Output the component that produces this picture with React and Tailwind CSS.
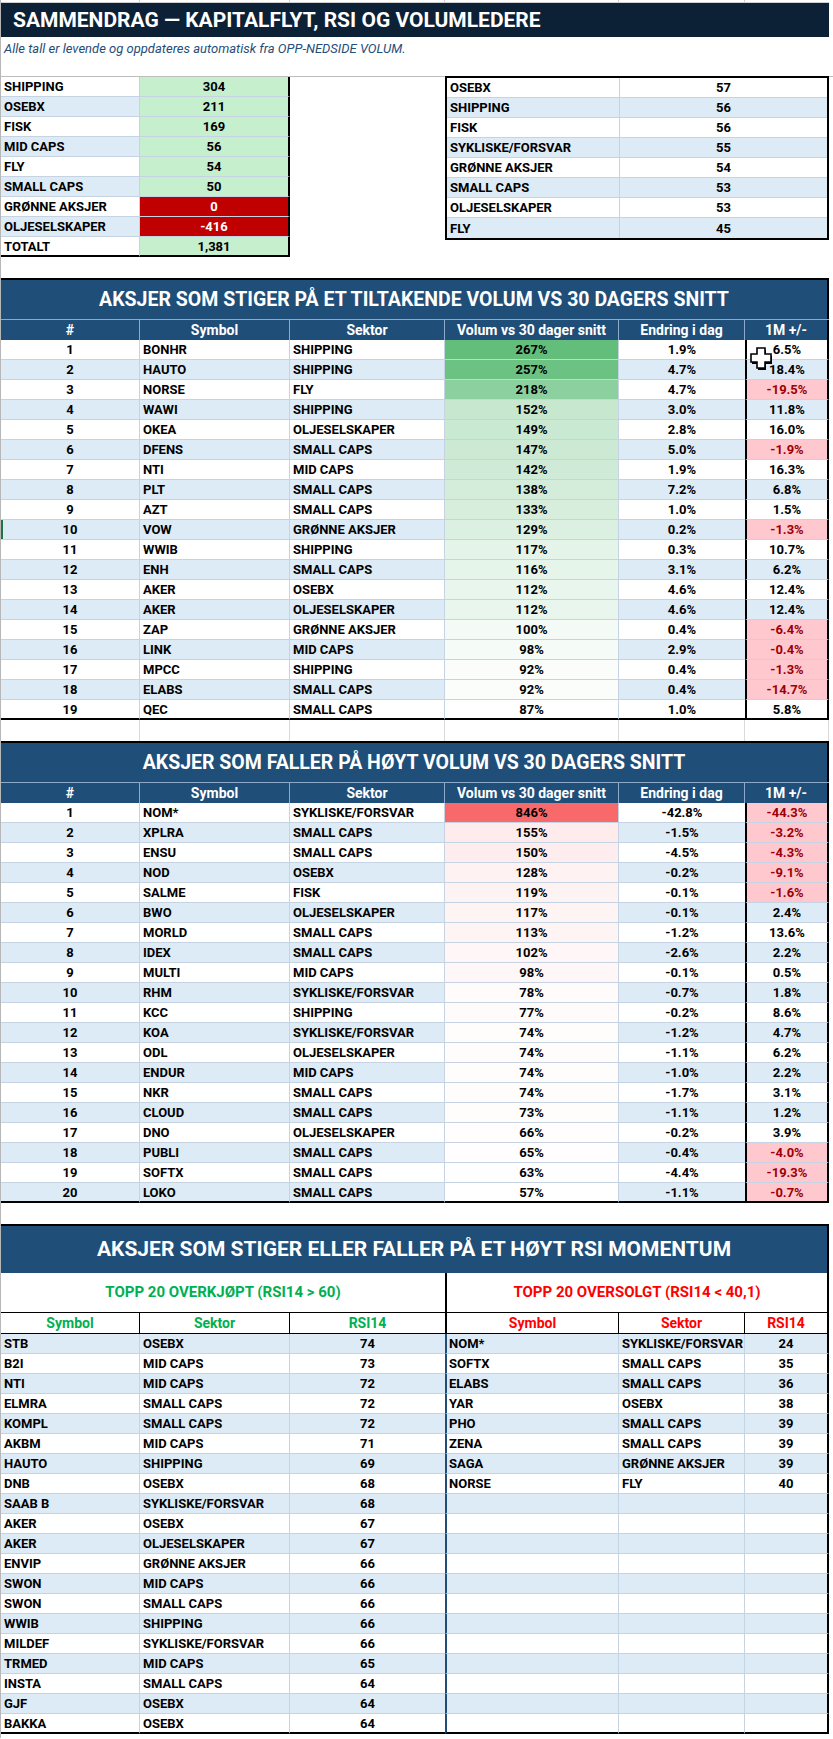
import React from "react";

const W = { a: "w-[139px]", b: "w-[150px]", c: "w-[155px]", d: "w-[174px]", e: "w-[126px]", f: "w-[84px]" };
const BLUE = "bg-[#ddebf7]";
const LR = "border-r border-r-[#c5d3e3]";
const LB = "border-b border-b-[#c5d3e3]";
const LASTB = "border-b-2 border-b-black";

const mix = (v, min, max, rgb) => {
  const t = Math.max(0, Math.min(1, (v - min) / (max - min)));
  const c = rgb.map((x) => Math.round(255 + (x - 255) * t));
  return `rgb(${c[0]},${c[1]},${c[2]})`;
};

const summaryLeft = [
  ["SHIPPING", "304", "g"],
  ["OSEBX", "211", "g"],
  ["FISK", "169", "g"],
  ["MID CAPS", "56", "g"],
  ["FLY", "54", "g"],
  ["SMALL CAPS", "50", "g"],
  ["GRØNNE AKSJER", "0", "r"],
  ["OLJESELSKAPER", "-416", "r"],
  ["TOTALT", "1,381", "g"],
];
const summaryRight = [
  ["OSEBX", "57"],
  ["SHIPPING", "56"],
  ["FISK", "56"],
  ["SYKLISKE/FORSVAR", "55"],
  ["GRØNNE AKSJER", "54"],
  ["SMALL CAPS", "53"],
  ["OLJESELSKAPER", "53"],
  ["FLY", "45"],
];

const up = [
  ["BONHR", "SHIPPING", 267, "1.9%", "6.5%"],
  ["HAUTO", "SHIPPING", 257, "4.7%", "18.4%"],
  ["NORSE", "FLY", 218, "4.7%", "-19.5%"],
  ["WAWI", "SHIPPING", 152, "3.0%", "11.8%"],
  ["OKEA", "OLJESELSKAPER", 149, "2.8%", "16.0%"],
  ["DFENS", "SMALL CAPS", 147, "5.0%", "-1.9%"],
  ["NTI", "MID CAPS", 142, "1.9%", "16.3%"],
  ["PLT", "SMALL CAPS", 138, "7.2%", "6.8%"],
  ["AZT", "SMALL CAPS", 133, "1.0%", "1.5%"],
  ["VOW", "GRØNNE AKSJER", 129, "0.2%", "-1.3%"],
  ["WWIB", "SHIPPING", 117, "0.3%", "10.7%"],
  ["ENH", "SMALL CAPS", 116, "3.1%", "6.2%"],
  ["AKER", "OSEBX", 112, "4.6%", "12.4%"],
  ["AKER", "OLJESELSKAPER", 112, "4.6%", "12.4%"],
  ["ZAP", "GRØNNE AKSJER", 100, "0.4%", "-6.4%"],
  ["LINK", "MID CAPS", 98, "2.9%", "-0.4%"],
  ["MPCC", "SHIPPING", 92, "0.4%", "-1.3%"],
  ["ELABS", "SMALL CAPS", 92, "0.4%", "-14.7%"],
  ["QEC", "SMALL CAPS", 87, "1.0%", "5.8%"],
];

const down = [
  ["NOM*", "SYKLISKE/FORSVAR", 846, "-42.8%", "-44.3%"],
  ["XPLRA", "SMALL CAPS", 155, "-1.5%", "-3.2%"],
  ["ENSU", "SMALL CAPS", 150, "-4.5%", "-4.3%"],
  ["NOD", "OSEBX", 128, "-0.2%", "-9.1%"],
  ["SALME", "FISK", 119, "-0.1%", "-1.6%"],
  ["BWO", "OLJESELSKAPER", 117, "-0.1%", "2.4%"],
  ["MORLD", "SMALL CAPS", 113, "-1.2%", "13.6%"],
  ["IDEX", "SMALL CAPS", 102, "-2.6%", "2.2%"],
  ["MULTI", "MID CAPS", 98, "-0.1%", "0.5%"],
  ["RHM", "SYKLISKE/FORSVAR", 78, "-0.7%", "1.8%"],
  ["KCC", "SHIPPING", 77, "-0.2%", "8.6%"],
  ["KOA", "SYKLISKE/FORSVAR", 74, "-1.2%", "4.7%"],
  ["ODL", "OLJESELSKAPER", 74, "-1.1%", "6.2%"],
  ["ENDUR", "MID CAPS", 74, "-1.0%", "2.2%"],
  ["NKR", "SMALL CAPS", 74, "-1.7%", "3.1%"],
  ["CLOUD", "SMALL CAPS", 73, "-1.1%", "1.2%"],
  ["DNO", "OLJESELSKAPER", 66, "-0.2%", "3.9%"],
  ["PUBLI", "SMALL CAPS", 65, "-0.4%", "-4.0%"],
  ["SOFTX", "SMALL CAPS", 63, "-4.4%", "-19.3%"],
  ["LOKO", "SMALL CAPS", 57, "-1.1%", "-0.7%"],
];

const overbought = [
  ["STB", "OSEBX", "74"],
  ["B2I", "MID CAPS", "73"],
  ["NTI", "MID CAPS", "72"],
  ["ELMRA", "SMALL CAPS", "72"],
  ["KOMPL", "SMALL CAPS", "72"],
  ["AKBM", "MID CAPS", "71"],
  ["HAUTO", "SHIPPING", "69"],
  ["DNB", "OSEBX", "68"],
  ["SAAB B", "SYKLISKE/FORSVAR", "68"],
  ["AKER", "OSEBX", "67"],
  ["AKER", "OLJESELSKAPER", "67"],
  ["ENVIP", "GRØNNE AKSJER", "66"],
  ["SWON", "MID CAPS", "66"],
  ["SWON", "SMALL CAPS", "66"],
  ["WWIB", "SHIPPING", "66"],
  ["MILDEF", "SYKLISKE/FORSVAR", "66"],
  ["TRMED", "MID CAPS", "65"],
  ["INSTA", "SMALL CAPS", "64"],
  ["GJF", "OSEBX", "64"],
  ["BAKKA", "OSEBX", "64"],
];
const oversold = [
  ["NOM*", "SYKLISKE/FORSVAR", "24"],
  ["SOFTX", "SMALL CAPS", "35"],
  ["ELABS", "SMALL CAPS", "36"],
  ["YAR", "OSEBX", "38"],
  ["PHO", "SMALL CAPS", "39"],
  ["ZENA", "SMALL CAPS", "39"],
  ["SAGA", "GRØNNE AKSJER", "39"],
  ["NORSE", "FLY", "40"],
];

function Cell({ w, className = "", style, children }) {
  return (
    <div style={style} className={`${w} h-full shrink-0 flex items-center ${className}`}>
      {children}
    </div>
  );
}

function BlankRow() {
  const g = "border-r border-r-[#dadada]";
  return (
    <div className="flex h-[21px]">
      <Cell w={W.a} className={g} />
      <Cell w={W.b} className={g} />
      <Cell w={W.c} className={g} />
      <Cell w={W.d} className={g} />
      <Cell w={W.e} className={g} />
      <Cell w={W.f} className={g} />
    </div>
  );
}

function MoverTable({ title, rows, scale, titleH }) {
  const hdr = "justify-center border-r border-r-[#8eaacb]";
  const max = Math.max(...rows.map((r) => r[2]));
  const min = Math.min(...rows.map((r) => r[2]));
  return (
    <div className="w-[828px]">
      <div
        className={`${titleH} border-t-2 border-t-black border-r-2 border-r-black bg-[#1f4e78] flex items-center justify-center text-white font-bold text-[19.5px] leading-none`}
      >
        {title}
      </div>
      <div className="h-[21px] flex bg-[#1f4e78] text-white font-bold text-[14px] leading-none border-t border-t-[#8eaacb]">
        <Cell w={W.a} className={hdr}>#</Cell>
        <Cell w={W.b} className={hdr}>Symbol</Cell>
        <Cell w={W.c} className={hdr}>Sektor</Cell>
        <Cell w={W.d} className={hdr}>Volum vs 30 dager snitt</Cell>
        <Cell w={W.e} className={hdr}>Endring i dag</Cell>
        <Cell w={W.f} className="justify-center border-r-2 border-r-black">1M +/-</Cell>
      </div>
      {rows.map((r, i) => {
        const bg = i % 2 === 1 ? BLUE : "bg-white";
        const bb = i === rows.length - 1 ? LASTB : LB;
        const neg = r[4].startsWith("-");
        const volBg = scale === "g" ? mix(r[2], min, max, [99, 190, 123]) : mix(r[2], min, max, [248, 105, 107]);
        const mark = scale === "g" && i === 9 ? "shadow-[inset_2px_0_0_#217346]" : "";
        return (
          <div key={i} className="flex h-5 text-[13px] font-bold leading-none">
            <Cell w={W.a} className={`${bg} ${mark} justify-center ${LR} ${bb}`}>{i + 1}</Cell>
            <Cell w={W.b} className={`${bg} pl-[3px] ${LR} ${bb}`}>{r[0]}</Cell>
            <Cell w={W.c} className={`${bg} pl-[3px] ${LR} ${bb}`}>{r[1]}</Cell>
            <Cell w={W.d} style={{ backgroundColor: volBg }} className={`justify-center ${LR} ${bb}`}>
              {r[2]}%
            </Cell>
            <Cell w={W.e} className={`${bg} justify-center ${bb}`}>{r[3]}</Cell>
            <Cell
              w={W.f}
              className={`${neg ? "bg-[#ffc7ce] text-[#9c0006]" : bg} justify-center border-x-2 border-x-black ${bb}`}
            >
              {r[4]}
            </Cell>
          </div>
        );
      })}
    </div>
  );
}

function RsiTable() {
  const gh = "justify-center text-[#00b050]";
  const rh = "justify-center text-[#ff0000]";
  return (
    <div className="w-[828px]">
      <div className="h-[49px] border-t-2 border-t-black border-r-2 border-r-black bg-[#1f4e78] flex items-center justify-center text-white font-bold text-[21px] leading-none">
        AKSJER SOM STIGER ELLER FALLER PÅ ET HØYT RSI MOMENTUM
      </div>
      <div className="h-[40px] flex font-bold text-[15px] leading-none">
        <div className="w-[444px] flex items-center justify-center text-[#00b050] border-b border-b-black">
          TOPP 20 OVERKJØPT (RSI14 &gt; 60)
        </div>
        <div className="w-[384px] flex items-center justify-center text-[#ff0000] border-l-2 border-l-black border-r-2 border-r-black border-b border-b-black">
          TOPP 20 OVERSOLGT (RSI14 &lt; 40,1)
        </div>
      </div>
      <div className="h-[21px] flex font-bold text-[14px] leading-none border-b border-b-black">
        <Cell w={W.a} className={`${gh} border-r border-r-black`}>Symbol</Cell>
        <Cell w={W.b} className={`${gh} border-r border-r-black`}>Sektor</Cell>
        <Cell w={W.c} className={gh}>RSI14</Cell>
        <Cell w={W.d} className={`${rh} border-l-2 border-l-black border-r border-r-black`}>Symbol</Cell>
        <Cell w={W.e} className={`${rh} border-r border-r-black`}>Sektor</Cell>
        <Cell w={W.f} className={`${rh} border-r-2 border-r-black`}>RSI14</Cell>
      </div>
      {overbought.map((r, i) => {
        const bg = i % 2 === 0 ? BLUE : "bg-white";
        const bb = i === overbought.length - 1 ? LASTB : LB;
        const o = oversold[i] || ["", "", ""];
        return (
          <div key={i} className="flex h-5 text-[13px] font-bold leading-none">
            <Cell w={W.a} className={`${bg} pl-[3px] ${LR} ${bb}`}>{r[0]}</Cell>
            <Cell w={W.b} className={`${bg} pl-[3px] ${LR} ${bb}`}>{r[1]}</Cell>
            <Cell w={W.c} className={`${bg} justify-center ${bb}`}>{r[2]}</Cell>
            <Cell w={W.d} className={`${bg} pl-[2px] border-l-2 border-l-[#1f4e78] ${LR} ${bb}`}>{o[0]}</Cell>
            <Cell w={W.e} className={`${bg} pl-[3px] ${LR} ${bb}`}>{o[1]}</Cell>
            <Cell w={W.f} className={`${bg} justify-center border-r-2 border-r-black ${bb}`}>{o[2]}</Cell>
          </div>
        );
      })}
    </div>
  );
}

function Cursor() {
  return (
    <svg className="absolute left-[750px] top-[347px]" width="24" height="24" viewBox="0 0 24 24">
      <polygon
        points="8,3 16,3 16,9 22,9 22,17 16,17 16,23 8,23 8,17 2,17 2,9 8,9"
        fill="#000"
      />
      <polygon
        points="7,1 15,1 15,7 21,7 21,15 15,15 15,21 7,21 7,15 1,15 1,7 7,7"
        fill="#fff"
        stroke="#000"
        strokeWidth="1.6"
      />
    </svg>
  );
}

export default function App() {
  return (
    <div className="relative w-[833px] bg-white text-black font-['Roboto','Liberation_Sans',sans-serif]">
      <div className="w-[829px] border-l border-l-[#b7b7b7]">
        <div className="flex h-[3px] border-b border-b-[#d0d0d0]">
          <Cell w={W.a} className="border-r border-r-[#d0d0d0]" />
          <Cell w={W.b} className="border-r border-r-[#d0d0d0]" />
          <Cell w={W.c} className="border-r border-r-[#d0d0d0]" />
          <Cell w={W.d} className="border-r border-r-[#d0d0d0]" />
          <Cell w={W.e} className="border-r border-r-[#d0d0d0]" />
          <Cell w={W.f} />
        </div>
        <div className="h-[34px] w-[828px] bg-[#0c2036] flex items-center pl-[12px] text-white font-bold text-[21px] leading-none">
          SAMMENDRAG — KAPITALFLYT, RSI OG VOLUMLEDERE
        </div>
        <div className="h-[40px] w-[832px] border-b border-b-[#bdbdbd] pl-[3px] pt-[4px]">
          <div className="italic text-[13px] leading-[16px] text-[#1f4e79]">
            Alle tall er levende og oppdateres automatisk fra OPP-NEDSIDE VOLUM.
          </div>
        </div>

        <div className="flex">
          <div className="w-[289px]">
            {summaryLeft.map((r, i) => {
              const bg = i % 2 === 1 ? BLUE : "bg-white";
              const last = i === summaryLeft.length - 1;
              const bb = last ? LASTB : LB;
              const val = r[2] === "g" ? "bg-[#c6efce] text-black" : "bg-[#c00000] text-white";
              return (
                <div key={i} className="flex h-5 text-[13px] font-bold leading-none">
                  <Cell w={W.a} className={`${bg} pl-[3px] ${LR} ${bb}`}>{r[0]}</Cell>
                  <Cell w={W.b} className={`${val} justify-center border-r-2 border-r-black ${bb}`}>{r[1]}</Cell>
                </div>
              );
            })}
          </div>
          <div className="ml-[155px] w-[384px] -mt-px self-start border-2 border-black">
            {summaryRight.map((r, i) => {
              const bg = i % 2 === 1 ? BLUE : "bg-white";
              const bb = i === summaryRight.length - 1 ? "" : LB;
              return (
                <div key={i} className={`flex h-5 text-[13px] font-bold leading-none ${bg}`}>
                  <Cell w="w-[173px]" className={`pl-[3px] ${LR} ${bb}`}>{r[0]}</Cell>
                  <Cell w="w-[207px]" className={`justify-center ${bb}`}>{r[1]}</Cell>
                </div>
              );
            })}
          </div>
        </div>

        <div className="h-[21px]" />
        <MoverTable
          title="AKSJER SOM STIGER PÅ ET TILTAKENDE VOLUM VS 30 DAGERS SNITT"
          rows={up}
          scale="g"
          titleH="h-[41px]"
        />
        <BlankRow />
        <MoverTable
          title="AKSJER SOM FALLER PÅ HØYT VOLUM VS 30 DAGERS SNITT"
          rows={down}
          scale="r"
          titleH="h-[41px]"
        />
        <div className="h-[21px]" />
        <RsiTable />
        <div className="h-[4px]" />
      </div>
      <Cursor />
    </div>
  );
}
